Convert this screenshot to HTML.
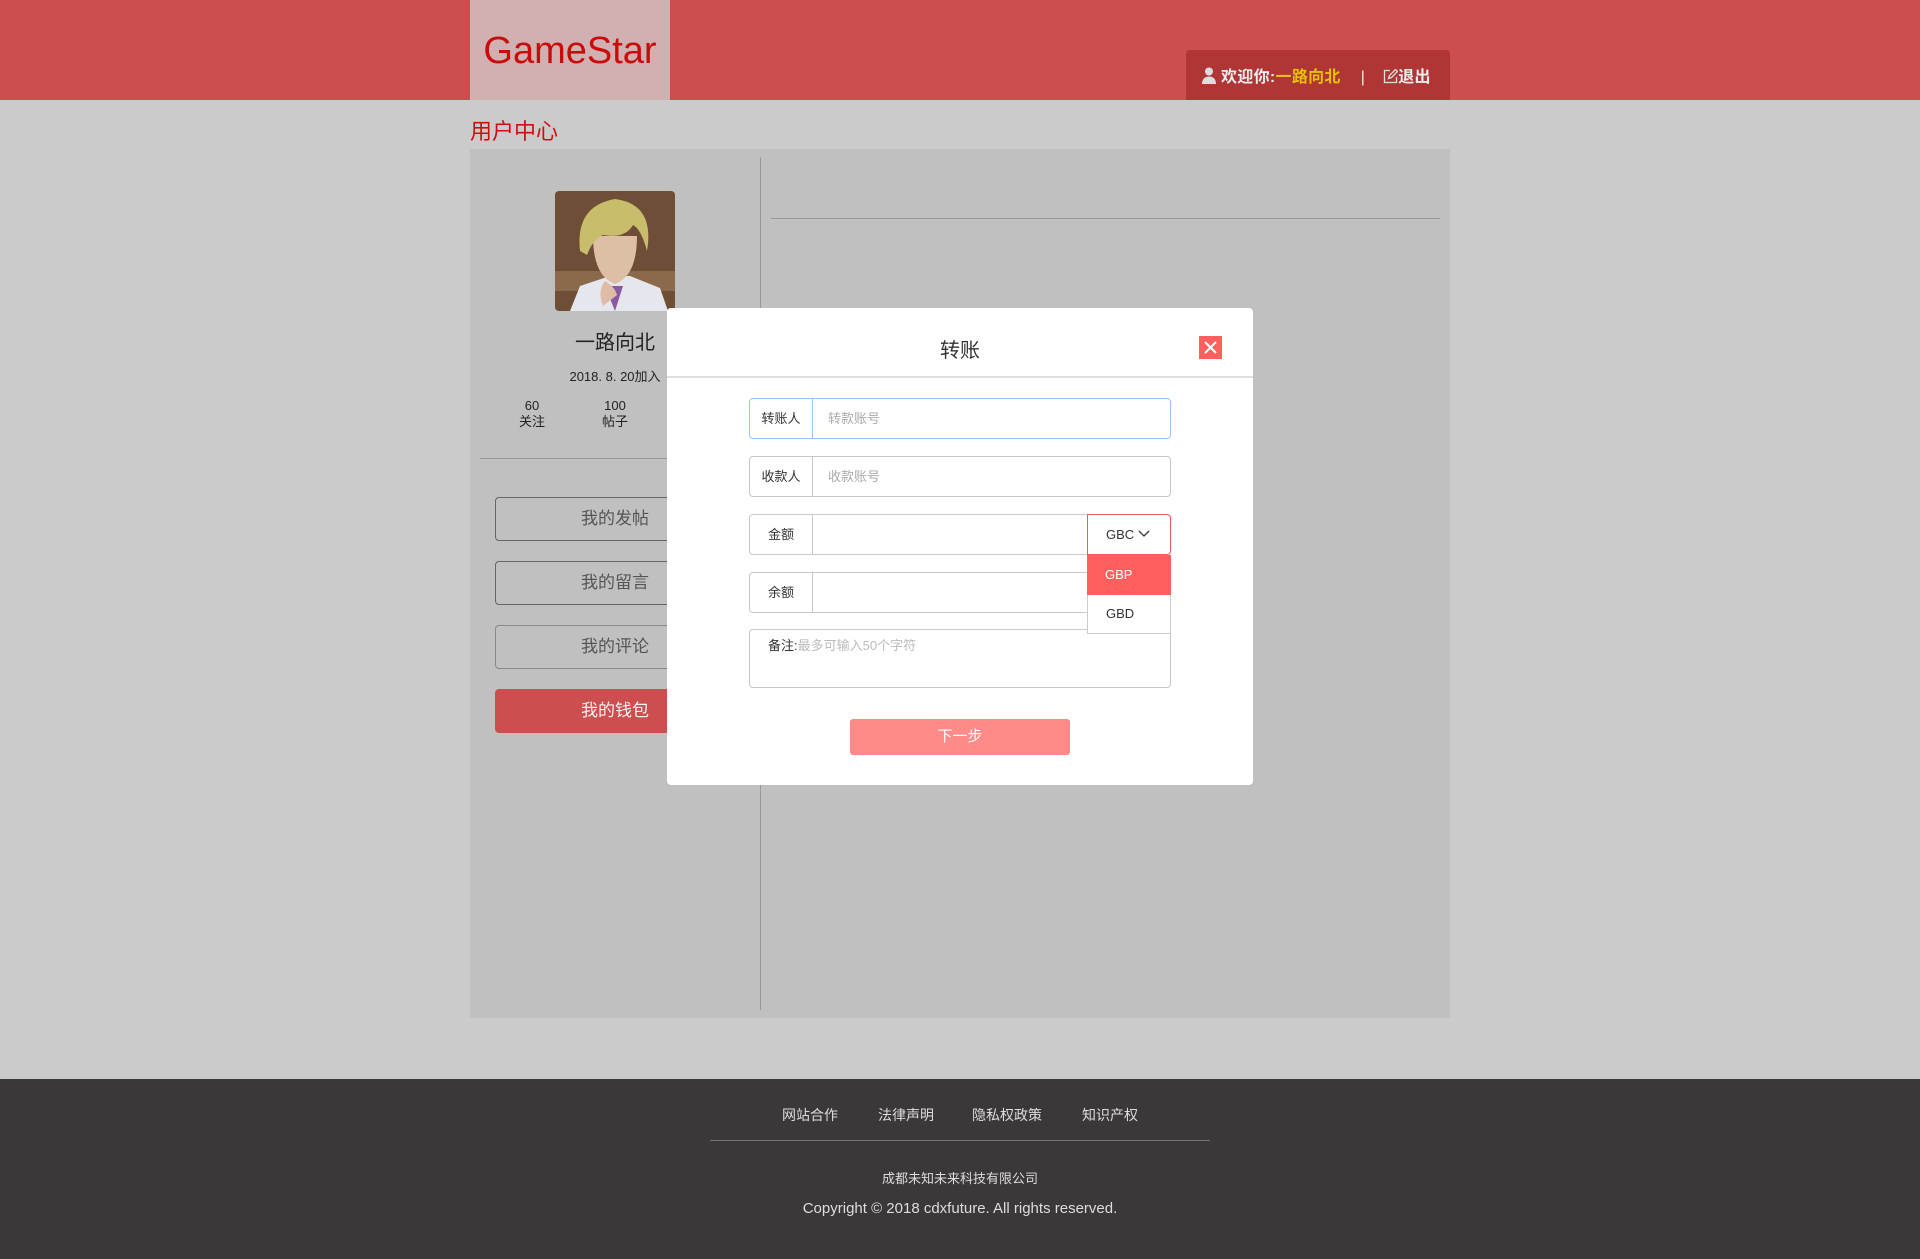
<!DOCTYPE html>
<html><head><meta charset="utf-8"><style>
*{margin:0;padding:0;box-sizing:border-box}
body{width:1920px;height:1259px;background:#cbcbcb;font-family:"Liberation Sans","Noto Sans CJK SC",sans-serif;position:relative;overflow:hidden}
.a{position:absolute}
.hdr{left:0;top:0;width:1920px;height:100px;background:#cd4e4e}
.logo{left:470px;top:0;width:200px;height:100px;background:#d0b0b0;color:#cc0a0a;font-size:38px;line-height:102px;text-align:center;letter-spacing:0px}
.ub{left:1186px;top:50px;width:264px;height:50px;background:#b03636;border-radius:4px 4px 0 0;color:#eee;font-size:16px;font-weight:bold;line-height:56px;padding-left:15px;white-space:nowrap;letter-spacing:0.3px}
.panel{left:470px;top:149px;width:980px;height:869px;background:#c0c0c0}
.btn{left:495px;width:240px;height:44px;border:1px solid #666;border-radius:4px;color:#555;font-size:17px;line-height:42px;text-align:center}
.modal{left:667px;top:308px;width:586px;height:477px;background:#fff;border-radius:4px}
.row{left:82px;width:422px;height:41px;border:1px solid #c8c8c8;border-radius:4px;font-size:13px;color:#333}
.row .l{position:absolute;left:0;top:0;width:63px;height:39px;border-right:1px solid #c8c8c8;text-align:center;line-height:39px}
.row .p{position:absolute;left:78px;top:0;line-height:39px;color:#aaa}
.ft{left:0;top:1079px;width:1920px;height:180px;background:#3c3839;color:#ddd}
</style></head><body>
<div class="a hdr"></div>
<div class="a logo">GameStar</div>
<div class="a ub"><svg width="16" height="17" viewBox="0 0 16 17" style="vertical-align:-2px;margin-right:4px"><circle cx="8" cy="4.5" r="4" fill="#ddd"/><path d="M1 17c0-5 3-7.5 7-7.5s7 2.5 7 7.5z" fill="#ddd"/></svg>欢迎你:<span style="color:#e8c000">一路向北</span><span style="margin:0 18px 0 20px;font-weight:normal">|</span><svg width="15" height="15" viewBox="0 0 15 15" style="vertical-align:-2px"><path d="M7 1.5H1.5v12h12V8M5.5 9.5l1-3 6-6 2 2-6 6z" fill="none" stroke="#ddd" stroke-width="1.3"/></svg>退出</div>
<div class="a" style="left:470px;top:114px;color:#cc1010;font-size:22px">用户中心</div>
<div class="a panel"></div>
<div class="a" style="left:760px;top:157px;width:1px;height:853px;background:#999"></div>
<div class="a" style="left:771px;top:218px;width:669px;height:1px;background:#999"></div>
<svg class="a" style="left:555px;top:191px;border-radius:4px" width="120" height="120" viewBox="0 0 120 120">
<rect width="120" height="120" fill="#6e4e36"/>
<rect y="80" width="120" height="20" fill="#8a6a4a"/>
<path d="M15 120l10-25 30-10 20 0 30 12 8 23z" fill="#e6e6ee"/>
<path d="M50 95l10 25 8-25z" fill="#8a5aa0"/>
<path d="M38 45q0 40 22 48q22-8 22-48z" fill="#dcbfa4"/>
<path d="M25 60q-5-45 35-52q40 5 32 52q-6-22-14-26q-8 14-30 10q-10 4-16 20z" fill="#c8bd6a"/>
<path d="M48 115q-6-15 2-25q10 6 12 14z" fill="#e0bca6"/>
</svg>
<div class="a" style="left:555px;top:326px;width:120px;text-align:center;font-size:20px;color:#222">一路向北</div>
<div class="a" style="left:555px;top:366px;width:120px;text-align:center;font-size:13px;color:#222">2018. 8. 20加入</div>
<div class="a" style="left:507px;top:398px;width:50px;text-align:center;font-size:13px;color:#222;line-height:16px">60<br>关注</div>
<div class="a" style="left:590px;top:398px;width:50px;text-align:center;font-size:13px;color:#222;line-height:16px">100<br>帖子</div>
<div class="a" style="left:480px;top:458px;width:280px;height:1px;background:#999"></div>
<div class="a btn" style="top:497px">我的发帖</div>
<div class="a btn" style="top:561px">我的留言</div>
<div class="a btn" style="top:625px;border-color:#888">我的评论</div>
<div class="a btn" style="top:689px;background:#cd4e4e;border-color:#cd4e4e;color:#f2f2f2">我的钱包</div>
<div class="a modal">
 <div class="a" style="left:0;top:26px;width:586px;text-align:center;font-size:20px;color:#333">转账</div>
 <div class="a" style="left:532px;top:28px;width:23px;height:23px;background:#ff5f5f"><svg width="23" height="23"><path d="M6 6l11 11M17 6L6 17" stroke="#fff" stroke-width="2"/></svg></div>
 <div class="a" style="left:0;top:68px;width:586px;height:2px;background:#ddd"></div>
 <div class="a row" style="top:90px;border-color:#9cc4f8"><div class="l" style="border-color:#9cc4f8">转账人</div><div class="p">转款账号</div></div>
 <div class="a row" style="top:148px"><div class="l">收款人</div><div class="p">收款账号</div></div>
 <div class="a row" style="top:206px"><div class="l">金额</div></div>
 <div class="a row" style="top:264px"><div class="l">余额</div></div>
 <div class="a row" style="top:321px;height:59px"><div class="p" style="left:18px;top:-4px;color:#333">备注:<span style="color:#bbb">最多可输入50个字符</span></div></div>
 <div class="a" style="left:420px;top:206px;width:84px;height:41px;border:1px solid #f05a5a;border-radius:0 4px 4px 0;background:#fff;font-size:13px;color:#333;line-height:39px;padding-left:18px">GBC <svg width="12" height="8" style="vertical-align:1px"><path d="M1 1l5 5 5-5" fill="none" stroke="#333" stroke-width="1.3"/></svg></div>
 <div class="a" style="left:420px;top:247px;width:84px;height:40px;background:#ff5f5f;color:#fff;font-size:13px;line-height:40px;padding-left:18px">GBP</div>
 <div class="a" style="left:420px;top:287px;width:84px;height:39px;background:#fff;border:1px solid #ccc;border-top:0;color:#333;font-size:13px;line-height:38px;padding-left:18px">GBD</div>
 <div class="a" style="left:183px;top:411px;width:220px;height:36px;background:#ff8a8a;border-radius:3px;color:#fff;font-size:15px;text-align:center;line-height:36px">下一步</div>
</div>
<div class="a ft">
 <div class="a" style="left:782px;top:26px;font-size:14px">网站合作</div>
 <div class="a" style="left:878px;top:26px;font-size:14px">法律声明</div>
 <div class="a" style="left:972px;top:26px;font-size:14px">隐私权政策</div>
 <div class="a" style="left:1082px;top:26px;font-size:14px">知识产权</div>
 <div class="a" style="left:710px;top:61px;width:500px;height:1px;background:#777"></div>
 <div class="a" style="left:0;top:89px;width:1920px;text-align:center;font-size:13px">成都未知未来科技有限公司</div>
 <div class="a" style="left:0;top:121px;width:1920px;text-align:center;font-size:15px">Copyright © 2018 cdxfuture. All rights reserved.</div>
</div>
</body></html>
